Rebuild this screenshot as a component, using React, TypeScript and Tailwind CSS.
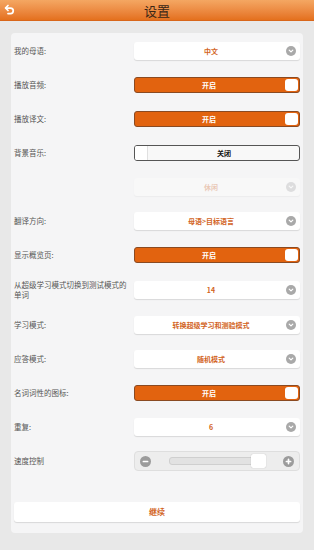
import React from 'react';

const FONT = { fontFamily: '"Noto Sans CJK SC", "Noto Sans", sans-serif' };

type Row =
  | { kind: 'select'; label: string; value: string; disabled?: boolean; tall?: boolean }
  | { kind: 'toggle'; label: string; on: boolean }
  | { kind: 'slider'; label: string };

const rows: Row[] = [
  { kind: 'select', label: '我的母语:', value: '中文' },
  { kind: 'toggle', label: '播放音频:', on: true },
  { kind: 'toggle', label: '播放译文:', on: true },
  { kind: 'toggle', label: '背景音乐:', on: false },
  { kind: 'select', label: '', value: '休闲', disabled: true },
  { kind: 'select', label: '翻译方向:', value: '母语>目标语言' },
  { kind: 'toggle', label: '显示概览页:', on: true },
  { kind: 'select', label: '从超级学习模式切换到测试模式的单词', value: '14', tall: true },
  { kind: 'select', label: '学习模式:', value: '转换超级学习和测验模式' },
  { kind: 'select', label: '应答模式:', value: '随机模式' },
  { kind: 'toggle', label: '名词词性的图标:', on: true },
  { kind: 'select', label: '重复:', value: '6' },
  { kind: 'slider', label: '速度控制' },
];

const Chevron = () => (
  <span className="absolute right-[4px] top-1/2 -translate-y-1/2 w-[10px] h-[10px] rounded-full bg-[#a9a9a9] flex items-center justify-center">
    <svg width="6" height="6" viewBox="0 0 10 10">
      <path d="M2 3.5 5 6.5 8 3.5" fill="none" stroke="#fff" strokeWidth="2" strokeLinecap="round" strokeLinejoin="round" />
    </svg>
  </span>
);

const Select = ({ value, disabled }: { value: string; disabled?: boolean }) => (
  <div className={`relative w-[166px] h-[18px] bg-white rounded-[3px] shadow-[0_1px_1px_rgba(0,0,0,0.12)] flex items-center justify-center pr-[12px] ${disabled ? 'opacity-30' : ''}`}>
    <span className="text-[7px] font-bold text-[#d2641e] leading-none">{value}</span>
    <Chevron />
  </div>
);

const Toggle = ({ on }: { on: boolean }) =>
  on ? (
    <div className="relative w-[166px] h-[16px] bg-[#e2630f] border border-[#8a4a22] rounded-[3px] flex items-center justify-center pr-[16px]">
      <span className="text-[7px] font-bold text-white leading-none">开启</span>
      <span className="absolute right-[1px] top-1/2 -translate-y-1/2 w-[13px] h-[12px] bg-white rounded-[3px]" />
    </div>
  ) : (
    <div className="relative w-[166px] h-[16px] bg-[#f8f8f8] border border-[#555] rounded-[3px] flex items-center justify-center pl-[14px]">
      <span className="text-[7px] font-bold text-[#111] leading-none">关闭</span>
      <span className="absolute left-0 top-0 w-[13px] h-full bg-white border-r border-[#e0e0e0] rounded-l-[2px]" />
    </div>
  );

const RoundBtn = ({ plus }: { plus?: boolean }) => (
  <span className="w-[11px] h-[11px] rounded-full bg-[#9b9b9b] flex items-center justify-center shrink-0">
    <svg width="7" height="7" viewBox="0 0 10 10">
      <path d="M2 5h6" stroke="#fff" strokeWidth="2.4" strokeLinecap="round" />
      {plus && <path d="M5 2v6" stroke="#fff" strokeWidth="2.4" strokeLinecap="round" />}
    </svg>
  </span>
);

const Slider = () => (
  <div className="w-[166px] h-[20px] bg-[#ededed] border border-[#dedede] rounded-[4px] flex items-center pl-[5px] pr-[5px]">
    <RoundBtn />
    <div className="relative ml-[18px] w-[97px] h-[8px]">
      <div className="absolute inset-y-0 left-0 right-[6px] bg-[#e2e2e2] border border-[#cfcfcf] rounded-[3px]" />
      <span className="absolute right-0 top-1/2 -translate-y-1/2 w-[15px] h-[14px] bg-white rounded-[2px] shadow-[0_0_1px_rgba(0,0,0,0.3)]" />
    </div>
    <div className="flex-1" />
    <RoundBtn plus />
  </div>
);

export default function App() {
  return (
    <div className="w-[314px] h-[550px] bg-[#e8e8e8] overflow-hidden" style={FONT}>
      {/* Header */}
      <div className="relative h-[21px] bg-gradient-to-b from-[#f4a762] to-[#e4701c] border-b border-[#d8661a] flex items-center justify-center">
        <svg className="absolute left-[4px] top-[4px]" width="12" height="12" viewBox="0 0 24 24">
          <path d="M8 3 3 8l5 5" fill="none" stroke="#fff" strokeWidth="3.5" strokeLinecap="round" strokeLinejoin="round" />
          <path d="M4 8h9a5.5 5.5 0 0 1 0 11H8" fill="none" stroke="#fff" strokeWidth="3.5" strokeLinecap="round" strokeLinejoin="round" />
        </svg>
        <span className="text-[13px] text-[#3a2616] leading-none">设置</span>
      </div>

      {/* Card */}
      <div className="ml-[11px] mt-[12px] w-[292px] bg-[#f5f5f6] rounded-[4px] pl-[3px] pr-[3px] pt-px pb-[11px] flex flex-col">
        {rows.map((r, i) => (
          <div key={i} className={`flex items-center ${r.kind === 'select' && r.tall ? 'h-[36px]' : 'h-[34px]'}`}>
            <div className="w-[120px] text-[7.5px] leading-[10px] text-[#555] pr-[2px]">{r.label}</div>
            {r.kind === 'select' && <Select value={r.value} disabled={r.disabled} />}
            {r.kind === 'toggle' && <Toggle on={r.on} />}
            {r.kind === 'slider' && <Slider />}
          </div>
        ))}
        <button className="mt-[24px] h-[20px] w-full bg-white rounded-[3px] shadow-[0_1px_1px_rgba(0,0,0,0.12)] flex items-center justify-center">
          <span className="text-[8px] font-bold text-[#d2641e] leading-none">继续</span>
        </button>
      </div>
    </div>
  );
}
